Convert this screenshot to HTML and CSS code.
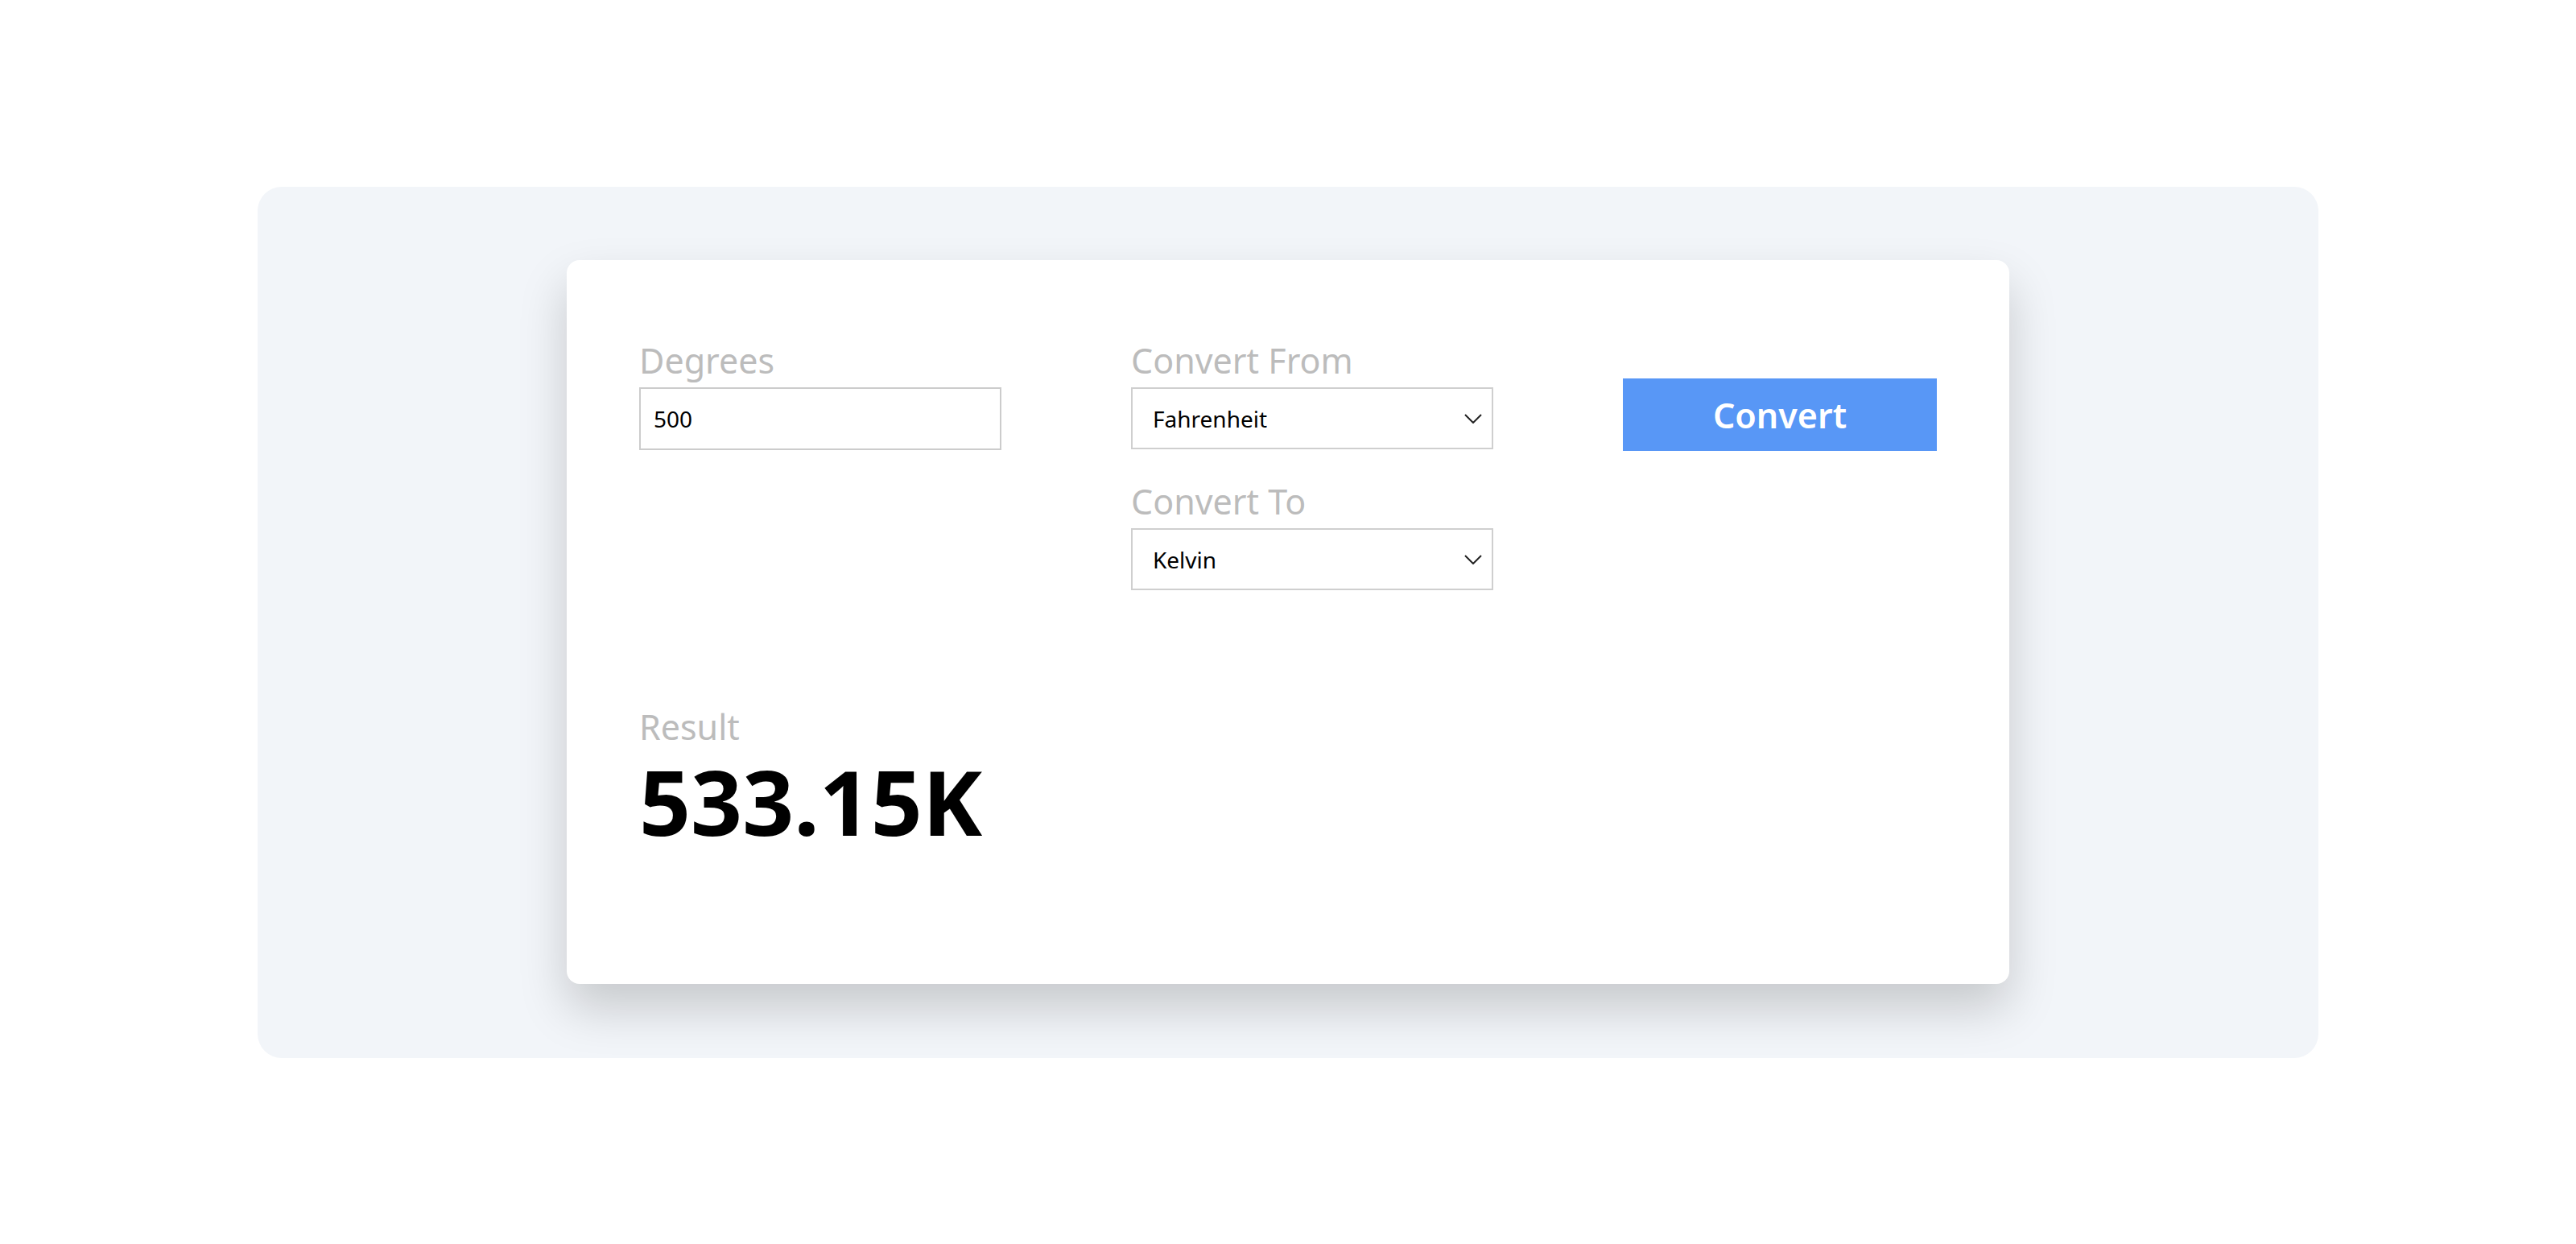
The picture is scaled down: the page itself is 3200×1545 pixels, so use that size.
FILE: index.html
```html
<!DOCTYPE html>
<html lang="en">
<head>
<meta charset="utf-8">
<title>Temperature Converter</title>
<link rel="stylesheet" href="styles.css">
</head>
<body>
<main class="stage">
  <section class="card">
    <div class="controls">
      <div class="col">
        <div class="field">
          <label class="label" for="deg">Degrees</label>
          <input class="input" id="deg" type="text" value="500">
        </div>
      </div>
      <div class="col col-selects">
        <div class="field">
          <label class="label">Convert From</label>
          <div class="select">
            <span class="select-text">Fahrenheit</span>
            <svg class="chevron" width="22" height="12" viewBox="0 0 22 12"><polyline points="1,1 11,11 21,1" fill="none" stroke="#222" stroke-width="2"/></svg>
          </div>
        </div>
        <div class="field">
          <label class="label">Convert To</label>
          <div class="select">
            <span class="select-text">Kelvin</span>
            <svg class="chevron" width="22" height="12" viewBox="0 0 22 12"><polyline points="1,1 11,11 21,1" fill="none" stroke="#222" stroke-width="2"/></svg>
          </div>
        </div>
      </div>
      <div class="col col-btn">
        <button class="btn">Convert</button>
      </div>
    </div>
    <div class="result">
      <div class="label result-label">Result</div>
      <div class="value">533.15K</div>
    </div>
  </section>
</main>
</body>
</html>
```

FILE: styles.css
```css
html, body {
  margin: 0;
  padding: 0;
  background: #ffffff;
}
body {
  height: 100vh;
  display: flex;
  align-items: center;
  justify-content: center;
  font-family: "Noto Sans", "Open Sans", sans-serif;
}
.stage {
  width: 2560px;
  height: 1082px;
  background: #f2f5f9;
  border-radius: 30px;
  display: flex;
  align-items: center;
  justify-content: center;
}
.card {
  width: 1792px;
  box-sizing: border-box;
  padding: 103px 90px 171px 90px;
  background: #ffffff;
  border-radius: 16px;
  box-shadow: 0 30px 60px rgba(0, 0, 0, 0.18);
}
.controls {
  display: flex;
  justify-content: space-between;
  align-items: flex-start;
}
.col {
  display: flex;
  flex-direction: column;
}
.col-selects {
  gap: 43px;
}
.field {
  display: flex;
  flex-direction: column;
  gap: 11px;
}
.label {
  font-size: 43px;
  line-height: 44px;
  color: #bcbcbc;
  font-weight: 400;
}
.input {
  width: 450px;
  height: 78px;
  box-sizing: border-box;
  border: 2px solid #cccccc;
  padding: 0 16px;
  font-family: inherit;
  font-size: 28px;
  color: #000;
  outline: none;
  background: #fff;
}
.select {
  width: 450px;
  height: 77px;
  box-sizing: border-box;
  border: 2px solid #cfcfcf;
  padding: 0 12px 0 25px;
  display: flex;
  align-items: center;
  justify-content: space-between;
  background: #fff;
}
.select-text {
  font-size: 28px;
  color: #000;
}
.chevron {
  display: block;
}
.col-btn {
  padding-top: 44px;
}
.btn {
  width: 390px;
  height: 90px;
  border: none;
  background: #5897f6;
  color: #ffffff;
  font-family: inherit;
  font-size: 43px;
  font-weight: 600;
  padding: 0;
}
.result {
  margin-top: 148px;
  display: flex;
  flex-direction: column;
  gap: 14px;
}
.value {
  font-size: 112px;
  line-height: 112px;
  font-weight: 700;
  color: #000;
}
```
